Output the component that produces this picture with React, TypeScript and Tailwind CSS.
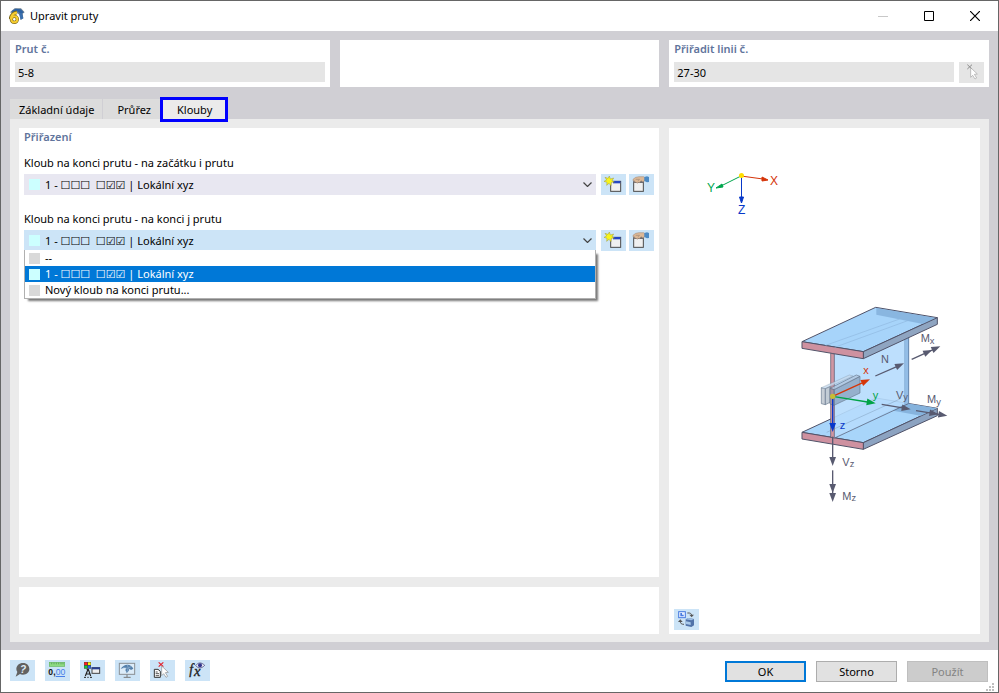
import React, { useState } from 'react';

const ASSIGNED_HINGE = '1 - ☐☐☐\u00a0\u00a0☐☑☑ | Lokální xyz';

interface HingeOption {
  id: string;
  label: string;
  swatch: string;
}

const HINGE_OPTIONS: HingeOption[] = [
  { id: 'none', label: '--', swatch: 'bg-[#d9d9d9]' },
  { id: 'hinge-1', label: ASSIGNED_HINGE, swatch: 'bg-[#ccffff]' },
  { id: 'new', label: 'Nový kloub na konci prutu...', swatch: 'bg-[#d9d9d9]' },
];

const TABS = ['Základní údaje', 'Průřez', 'Klouby'];

// All toolbar glyphs share one 75 x 63 drawing area
const Glyph: React.FC<{ children: React.ReactNode }> = ({ children }) => (
  <svg viewBox="0 0 75 63" className="h-[21px] w-[25px]" aria-hidden="true">
    {children}
  </svg>
);

const IconButton: React.FC<{ label: string; disabled?: boolean; children: React.ReactNode }> = ({
  label,
  disabled,
  children,
}) => (
  <button
    type="button"
    aria-label={label}
    disabled={disabled}
    className={`h-[21px] w-[25px] shrink-0 ${disabled ? 'bg-[#e5e5e5]' : 'bg-[#cce4f7]'}`}
  >
    <Glyph>{children}</Glyph>
  </button>
);

const AppIcon = () => (
  <svg viewBox="0 0 48 48" className="h-4 w-4" aria-hidden="true">
    <path d="M3 13L17 1h19l11 12-6 4 2 14-8 5-3-15-12-9-10 4z" fill="#6f8295" />
    <path d="M8 9l12-7 15 2 9 9-8 5-11-8-13 4z" fill="#2d62a3" />
    <path d="M30 17l9-3 4 17-8 4z" fill="#3a6fae" />
    <path d="M24 13C14 14 5 23 5 33" stroke="#7d6a1c" strokeWidth="11" fill="none" />
    <circle cx="16" cy="34" r="9" stroke="#7d6a1c" strokeWidth="10" fill="#fff" />
    <path d="M24 14C15 15 7 22 6 33" stroke="#f7cd2e" strokeWidth="7" fill="none" />
    <circle cx="16" cy="34" r="9" stroke="#f7cd2e" strokeWidth="6" fill="none" />
  </svg>
);

const NewHingeGlyph = () => (
  <>
    <rect x="29" y="22" width="30" height="30" fill="#f0f0f0" stroke="#4a4a4a" strokeWidth="3" />
    <path d="M36 21h22v7H36z" fill="#2446c4" />
    <path
      d="M25 6l3 9 10-3-5 8 7 4-9 1-1 10-6-7-7 6 1-9-9-3 8-4-5-8 9 3z"
      fill="#f8f51a"
      stroke="#9c9b3a"
      strokeWidth="1.500"
    />
  </>
);

const EditHingeGlyph = () => (
  <>
    <rect x="14" y="24" width="29" height="28" fill="#f0f0f0" stroke="#4a4a4a" strokeWidth="3" />
    <path d="M13 20h31v7H13z" fill="#6b6b70" />
    <path
      d="M12 16l8-6 10-2h14l3 2v11l-6 2-5-3-5 6-3-1-4 3-3-4-4 1-1-5h-4z"
      fill="#dcb896"
      stroke="#9c8473"
      strokeWidth="1.500"
    />
    <path d="M20 16h12M26 21l5-4" stroke="#8f7a6c" strokeWidth="1.500" fill="none" />
    <path d="M46 9l8-2 6 2v15l-6 1-8-4z" fill="#4d8bc5" />
  </>
);

const HelpGlyph = () => (
  <>
    <path d="M39 9c12 0 19 8 19 18s-8 17-19 17c-4 0-7-1-9-2l-13 8 5-14c-2-3-3-6-3-9 0-10 8-18 20-18z" fill="#626262" />
    <text x="30" y="38" fontSize="30" fontWeight="700" fontStyle="italic" fontFamily="Liberation Sans" fill="#e0eefa">
      ?
    </text>
  </>
);

const DecimalsGlyph = () => (
  <>
    <rect x="13" y="7" width="46" height="12" fill="#8edb83" stroke="#65b65d" strokeWidth="2" />
    <path d="M20 8v5M27 8v5M34 8v5M41 8v5M48 8v5M54 8v5" stroke="#4b8d49" strokeWidth="2" />
    <text x="10" y="45" fontSize="26" fontWeight="700" fontFamily="Liberation Sans" fill="#111">
      0,
    </text>
    <text x="32" y="45" fontSize="26" fontFamily="Liberation Sans" fill="#477ee8">
      00
    </text>
    <path d="M32 49.500h28" stroke="#477ee8" strokeWidth="3" />
  </>
);

const DisplayGlyph = () => (
  <>
    <rect x="12" y="6" width="21" height="20" fill="#444" />
    <path d="M13 7h9v8h-9z" fill="#ff2020" />
    <path d="M24 7h8v8h-8z" fill="#fff500" />
    <path d="M13 17h9v8h-9z" fill="#19c83b" />
    <path d="M24 17h8v8h-8z" fill="#2864ee" />
    <path d="M20 28h5l7 20M24 28l-8 20M19 42h11" stroke="#222" strokeWidth="3.500" fill="none" />
    <path d="M12 52h6M22 52h4M30 52h6" stroke="#222" strokeWidth="3" />
    <rect x="36" y="23" width="23" height="17" fill="#eee" stroke="#444" strokeWidth="3" />
    <path d="M35 22h25v6H35z" fill="#293f93" />
  </>
);

const MonitorGlyph = () => (
  <>
    <rect x="13" y="10" width="46" height="33" fill="#dcecf9" stroke="#8a8f94" strokeWidth="3" />
    <path d="M36 44v7M26 52h21" stroke="#777" strokeWidth="3" />
    <path d="M17 27c4-8 12-13 20-13 9 0 15 5 18 12l-7 4-5-4c-1 6-4 10-8 13l-4-9 3-5c-5-2-11-2-17 2z" fill="#5480ab" />
    <path d="M24 22l14 3 12-6M37 14l3 11-5 12" stroke="#93b4d3" strokeWidth="2" fill="none" />
  </>
);

const PickGlyph = () => (
  <>
    <path d="M13 28h11l7 6v18H13z" fill="#fff" stroke="#333" strokeWidth="3" />
    <path d="M17 36h6M17 41h10M17 47h10" stroke="#333" strokeWidth="2.500" />
    <path d="M26 7l14 13M40 7L26 20" stroke="#e3202a" strokeWidth="3.500" />
    <path d="M35 18l20 19-9 1 7 11-5 3-7-11-6 6z" fill="#fff" stroke="#8b8b8b" strokeWidth="2" />
  </>
);

const FormulaGlyph = () => (
  <>
    <text x="13" y="43" fontSize="41" fontStyle="italic" fontFamily="Liberation Serif" fill="#222" stroke="#222">
      f
    </text>
    <text x="27" y="47" fontSize="44" fontStyle="italic" fontFamily="Liberation Serif" fill="#222" stroke="#222">
      x
    </text>
    <path d="M32 17c7-10 17-11 27-1-9 10-19 10-27 1z" fill="#e8eaf7" stroke="#4d4f80" strokeWidth="2.500" />
    <circle cx="45" cy="16" r="6" fill="#32358c" />
  </>
);

const SwitchViewGlyph = () => (
  <>
    <rect x="14" y="8" width="20" height="18" fill="#e7f0ff" stroke="#487be0" strokeWidth="3" />
    <path d="M19 12v10h10v-5h-5v-5z" fill="#487be0" />
    <path d="M40 12c9-1 13 2 13 7" stroke="#555" strokeWidth="3" fill="none" />
    <path d="M46 17h14l-7 8z" fill="#555" />
    <path d="M30 46c-8 0-11-3-11-8" stroke="#555" strokeWidth="3" fill="none" />
    <path d="M12 39h14l-7-8z" fill="#555" />
    <path d="M35 31l8-4 17 3v19l-8 5-17-4z" fill="#5173a9" />
    <path d="M35 31l8-4 17 3-8 4z" fill="#9fc0e4" />
    <path d="M36 37l14 3v8l-14-3z" fill="#a9c9ea" />
  </>
);

const PointerGlyph = () => (
  <>
    <path d="M25 8l14 13M39 8L25 21" stroke="#8c8c8c" strokeWidth="3" />
    <path d="M35 17l20 19-9 1 7 11-5 3-7-11-6 6z" fill="#fff" stroke="#a5a5a5" strokeWidth="2" />
  </>
);

const Vector: React.FC<{ from: [number, number]; to: [number, number]; color: string; double?: boolean }> = ({
  from,
  to,
  color,
  double,
}) => {
  const angle = (Math.atan2(to[1] - from[1], to[0] - from[0]) * 180) / Math.PI;
  const length = Math.hypot(to[0] - from[0], to[1] - from[1]);
  return (
    <g transform={`translate(${from[0]} ${from[1]}) rotate(${angle})`} fill={color}>
      <path d={`M0 0H${length - 20}`} stroke={color} strokeWidth="4" />
      <path d={`M${length} 0l-27 -10v20z`} />
      {double && <path d={`M${length - 27} 0l-27 -10v20z`} />}
    </g>
  );
};

const BeamDrawing = () => (
  <svg
    viewBox="0 0 311 481"
    className="min-h-0 w-full flex-1"
    fontFamily="Liberation Sans, sans-serif"
    role="img"
    aria-label="Member end forces"
  >
    {/* global axes */}
    <g strokeWidth="1">
      <path d="M72 48L52 58" stroke="#00a64d" />
      <path d="M47 60l6-4 1 3z" fill="#00a64d" stroke="#00a64d" />
      <path d="M72 48l22 3" stroke="#d53409" />
      <path d="M99 52l-6-3v4z" fill="#d53409" stroke="#d53409" />
      <path d="M72.500 48v22" stroke="#0838c8" />
      <path d="M72.500 75l-2-6h4z" fill="#0838c8" stroke="#0838c8" />
      <circle cx="72.500" cy="47.500" r="2.500" fill="#ffde00" />
    </g>
    <g fontSize="12">
      <text x="38" y="64" fill="#00a64d">Y</text>
      <text x="101" y="57" fill="#d53409">X</text>
      <text x="69" y="86" fill="#0838c8">Z</text>
    </g>

    {/* I-section with local axes and internal forces */}
    <g transform="translate(121 167) scale(.33333)" strokeLinejoin="round">
      <g stroke="#505268" strokeWidth="3">
        <path d="M36 412L258 309l184 31-222 103z" fill="#a8d5fa" />
        <path d="M220 443l222-103v22L220 463z" fill="#8ca3c1" />
        <path d="M36 412l184 31v20L36 432z" fill="#ce91a0" />
      </g>
      <path d="M350 325l92 15-50 22-82-15z" fill="#86b3dd" />
      <path d="M132 176L346 68v257L132 430z" fill="#b6dcfd" fillOpacity=".9" />
      <path d="M343 70l13 4v252l-13 3z" fill="#93bde6" />
      <path d="M356 74v252" stroke="#5e83ab" strokeWidth="3" />
      <path d="M344 80v245" stroke="#83aad0" strokeWidth="1.500" />
      <path d="M134 429L355 326" stroke="#505268" strokeWidth="2" />
      <path d="M110 412L330 312" stroke="#7f9dbc" strokeWidth="1.500" />
      <g stroke="#505268" strokeWidth="3">
        <path d="M36 140L257 37l185 31-222 102z" fill="#a7d4fa" />
        <path d="M220 170L442 68v20L220 191z" fill="#8fa5c1" />
        <path d="M36 140l184 30v21L36 160z" fill="#ce91a0" />
        <path d="M122 175l11 2v252l-11-2z" fill="#d096a3" strokeWidth="2" />
      </g>
      <path d="M259 39l178 30-38 18-140-28z" fill="#7aa6d2" fillOpacity=".65" />
      <path d="M107 151L329 72M134 157L356 76" stroke="#8fb8df" strokeWidth="2" />
      <g stroke="#68788e" strokeWidth="2" fillOpacity=".8">
        <path d="M94 278l12 3v48l-12-3z" fill="#bac3cd" />
        <path d="M94 278l84-38 11 3-83 38z" fill="#c4d8ec" strokeOpacity=".4" />
        <path d="M106 281l14-6v47l-14 7z" fill="#b3bfcc" />
        <path d="M132 284l78-40v50l-78 37z" fill="#8ba4c0" />
        <path d="M120 280l79-40 11 4-78 40z" fill="#afc6de" />
        <path d="M120 280l12 4v47l-12-4z" fill="#a08f9f" />
      </g>
      <Vector from={[128, 304]} to={[240, 253]} color="#d53609" />
      <Vector from={[128, 304]} to={[257, 325]} color="#00a346" />
      <Vector from={[128, 304]} to={[128, 411]} color="#0838cb" />
      <circle cx="128" cy="304" r="8" fill="#c6bd35" />
      <Vector from={[256, 243]} to={[342, 205]} color="#585a70" />
      <Vector from={[365, 193]} to={[451, 154]} color="#585a70" double />
      <Vector from={[275, 328]} to={[362, 343]} color="#585a70" />
      <Vector from={[378, 347]} to={[472, 362]} color="#585a70" double />
      <Vector from={[128, 425]} to={[128, 513]} color="#585a70" />
      <Vector from={[128, 526]} to={[128, 621]} color="#585a70" double />
      <g fontSize="33" fill="#585a70">
        <text x="220" y="236" fill="#d53609">x</text>
        <text x="248" y="311" fill="#00a346">y</text>
        <text x="149" y="401" fill="#0838cb">z</text>
        <text x="273" y="205">N</text>
        <text x="392" y="142">M<tspan dy="4" fontSize="28">x</tspan></text>
        <text x="318" y="311">V<tspan dy="4" fontSize="28">y</tspan></text>
        <text x="411" y="325">M<tspan dy="4" fontSize="28">y</tspan></text>
        <text x="157" y="513">V<tspan dy="4" fontSize="28">z</tspan></text>
        <text x="157" y="614">M<tspan dy="4" fontSize="28">z</tspan></text>
      </g>
    </g>
  </svg>
);

interface HingeSelectProps {
  id: string;
  label: string;
  open?: boolean;
}

const HingeSelect: React.FC<HingeSelectProps> = ({ id, label, open }) => {
  const [value, setValue] = useState('hinge-1');
  const current = HINGE_OPTIONS.find(option => option.id === value) ?? HINGE_OPTIONS[1];

  return (
    <div>
      <label htmlFor={id} className="block h-[19px] leading-4">
        {label}
      </label>
      <div className="flex">
        <div className={`relative mr-[5px] flex h-[21px] min-w-0 flex-1 items-center ${open ? 'bg-[#cce4f7]' : 'bg-[#e8e7f1]'}`}>
          <span className={`ml-[5px] h-[11px] w-[11px] shrink-0 ${current.swatch}`} />
          <select
            id={id}
            value={value}
            onChange={event => setValue(event.target.value)}
            className="h-full min-w-0 flex-1 appearance-none bg-transparent pl-[5px] outline-none"
          >
            {HINGE_OPTIONS.map(option => (
              <option key={option.id} value={option.id}>
                {option.label}
              </option>
            ))}
          </select>
          <svg viewBox="0 0 9 5" className="pointer-events-none absolute right-1 h-[5px] w-[9px]" aria-hidden="true">
            <path d="M.5 .5l4 4 4-4" fill="none" stroke="#444" strokeWidth="1.200" />
          </svg>
          {open && (
            <ul
              role="listbox"
              aria-label={label}
              className="absolute inset-x-0 top-5 z-10 border border-t-0 border-[#b0b0b0] bg-white shadow-[3px_3px_2px_-1px_#777]"
            >
              {HINGE_OPTIONS.map(option => (
                <li
                  key={option.id}
                  role="option"
                  aria-selected={option.id === value}
                  onClick={() => setValue(option.id)}
                  className={`flex h-4 items-center pl-1 ${option.id === value ? 'bg-[#0078d7] text-white' : ''}`}
                >
                  <span className={`mr-[5px] h-[11px] w-[11px] ${option.swatch}`} />
                  {option.label}
                </li>
              ))}
            </ul>
          )}
        </div>
        <div className="flex gap-[3px]">
          <IconButton label="New hinge">
            <NewHingeGlyph />
          </IconButton>
          <IconButton label="Edit hinge">
            <EditHingeGlyph />
          </IconButton>
        </div>
      </div>
    </div>
  );
};

const TitleBar = () => (
  <header className="flex h-[30px] shrink-0 items-center bg-white pl-2">
    <AppIcon />
    <h1 className="ml-[5px] flex-1">Upravit pruty</h1>
    <button type="button" aria-label="Minimize" className="grid h-full w-[46px] place-items-center" disabled>
      <svg viewBox="0 0 10 10" className="h-[10px] w-[10px]" aria-hidden="true">
        <path d="M0 5.500h10" stroke="#c8c8c8" />
      </svg>
    </button>
    <button type="button" aria-label="Maximize" className="grid h-full w-[46px] place-items-center">
      <svg viewBox="0 0 10 10" className="h-[10px] w-[10px]" aria-hidden="true">
        <path d="M.5 .5h9v9h-9z" fill="none" stroke="#000" />
      </svg>
    </button>
    <button type="button" aria-label="Close" className="grid h-full w-[46px] place-items-center">
      <svg viewBox="0 0 10 10" className="h-[10px] w-[10px]" aria-hidden="true">
        <path d="M0 0l10 10M10 0L0 10" stroke="#000" strokeWidth="1.200" />
      </svg>
    </button>
  </header>
);

export default function App() {
  const [activeTab, setActiveTab] = useState('Klouby');

  return (
    <div className="flex min-h-screen flex-col border border-[#666] bg-[#d0cfd4] font-['Noto_Sans','DejaVu_Sans',sans-serif] text-[11px] leading-4 text-black">
      <TitleBar />

      <main className="flex flex-1 flex-col px-[9px] pt-[9px] pb-2">
        <div className="grid grid-cols-3 gap-[10px]">
          <div className="h-[47px] bg-white p-[5px] pt-px">
            <label htmlFor="member" className="block h-[21px] font-semibold text-[#61749c]">
              Prut č.
            </label>
            <input id="member" readOnly defaultValue="5-8" className="h-5 w-full bg-[#e5e5e5] px-[3px] outline-none" />
          </div>
          <div className="bg-white" />
          <div className="h-[47px] bg-white p-[5px] pt-px">
            <label htmlFor="line" className="block h-[21px] font-semibold text-[#61749c]">
              Přiřadit linii č.
            </label>
            <div className="flex gap-[5px]">
              <input id="line" readOnly defaultValue="27-30" className="h-5 min-w-0 flex-1 bg-[#e5e5e5] px-[3px] outline-none" />
              <IconButton label="Select line" disabled>
                <PointerGlyph />
              </IconButton>
            </div>
          </div>
        </div>

        <div role="tablist" className="mt-[10px] flex h-[22px] items-end">
          {TABS.map((tab, index) => (
            <button
              key={tab}
              type="button"
              role="tab"
              aria-selected={tab === activeTab}
              onClick={() => setActiveTab(tab)}
              className={
                tab === activeTab
                  ? 'relative z-10 -mb-[3px] h-[25px] border-3 border-[#0000fe] bg-[#ebebeb] pr-[13px] pl-[14px]'
                  : `h-5 bg-[#dcdcdc] pt-[2px] ${index === 0 ? 'border-r border-[#d0cfd4] pr-2 pl-[9px]' : 'pr-[9px] pl-[14px]'}`
              }
            >
              {tab}
            </button>
          ))}
        </div>

        <div className="grid flex-1 grid-cols-[minmax(0,1fr)_311px] gap-[10px] bg-[#ebebeb] px-[9px] pt-[9px] pb-2">
          <div className="flex flex-col gap-[10px]">
            <section className="flex-1 bg-white px-[5px] pt-px">
              <h2 className="font-semibold text-[#61749c]">Přiřazení</h2>
              <div className="mt-[10px] flex flex-col gap-4">
                <HingeSelect id="hinge-start" label="Kloub na konci prutu - na začátku i prutu" />
                <HingeSelect id="hinge-end" label="Kloub na konci prutu - na konci j prutu" open />
              </div>
            </section>
            <div className="h-[47px] bg-white" />
          </div>
          <section className="flex flex-col bg-white pb-1">
            <BeamDrawing />
            <div className="flex pl-[5px]">
              <IconButton label="Switch view">
                <SwitchViewGlyph />
              </IconButton>
            </div>
          </section>
        </div>
      </main>

      <footer className="relative flex h-[42px] shrink-0 items-start justify-between bg-white pt-[10px] pr-[10px] pl-[9px]">
        <div className="flex gap-[10px]">
          <IconButton label="Help">
            <HelpGlyph />
          </IconButton>
          <IconButton label="Units and decimal places">
            <DecimalsGlyph />
          </IconButton>
          <IconButton label="Display properties">
            <DisplayGlyph />
          </IconButton>
          <IconButton label="View">
            <MonitorGlyph />
          </IconButton>
          <IconButton label="Select in graphic">
            <PickGlyph />
          </IconButton>
          <IconButton label="Formula">
            <FormulaGlyph />
          </IconButton>
        </div>
        <div className="flex gap-[10px] pt-px">
          <button type="button" className="h-[21px] w-[81px] border-2 border-[#0078d7] bg-[#e1e1e1]">
            OK
          </button>
          <button type="button" className="h-[21px] w-[81px] border border-[#adadad] bg-[#e1e1e1]">
            Storno
          </button>
          <button type="button" disabled className="h-[21px] w-[81px] border border-[#bfbfbf] bg-[#cccccc] text-[#838383]">
            Použít
          </button>
        </div>
        <svg viewBox="0 0 8 8" className="absolute right-1 bottom-px h-2 w-2" aria-hidden="true">
          <path d="M6 0h2v2H6zM3 3h2v2H3zM6 3h2v2H6zM0 6h2v2H0zM3 6h2v2H3zM6 6h2v2H6z" fill="#bfbfbf" />
        </svg>
      </footer>
    </div>
  );
}
